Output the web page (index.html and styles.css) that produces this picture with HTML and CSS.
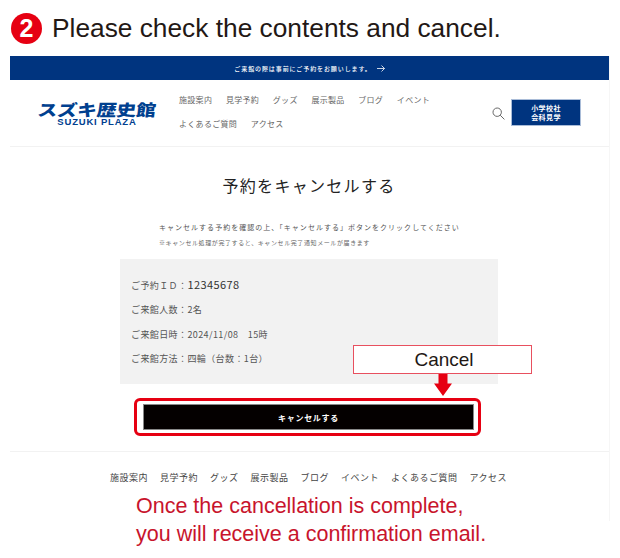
FILE: index.html
```html
<!DOCTYPE html>
<html lang="ja">
<head>
  <meta charset="UTF-8">
  <title>Please check the contents and cancel.</title>
  <meta name="viewport" content="width=device-width, initial-scale=1.0">
  <link rel="stylesheet" href="styles.css">
</head>
<body>
  <!-- STEP TITLE -->
  <div class="step">
    <div class="step-num">2</div>
    <h1 lang="en">Please check the contents and cancel.</h1>
  </div>

  <div class="page">
    <!-- NOTICE BAR -->
    <div class="notice">
      <span>ご来館の際は事前にご予約をお願いします。</span>
      <svg class="notice-arrow" width="8" height="7" viewBox="0 0 8 7" fill="none" stroke="#fff" stroke-width="0.8">
        <path d="M0 3.500H7.500M4.500 0.500L7.500 3.500L4.500 6.500"/>
      </svg>
    </div>

    <!-- HEADER -->
    <div class="header">
      <div class="logo">
        <div class="logo-jp">スズキ歴史館</div>
        <div class="logo-en" lang="en">SUZUKI PLAZA</div>
      </div>
      <div class="nav">
        <a>施設案内</a>
        <a>見学予約</a>
        <a>グッズ</a>
        <a>展示製品</a>
        <a>ブログ</a>
        <a>イベント</a>
        <a>よくあるご質問</a>
        <a>アクセス</a>
      </div>
      <svg class="search" width="13" height="13" viewBox="0 0 13 13" fill="none" stroke="#666" stroke-width="1">
        <circle cx="5.2" cy="5.2" r="4.2"/>
        <path d="M8.2 8.2L12.4 12.4"/>
      </svg>
      <div class="school-btn">小学校社<br>会科見学</div>
    </div>

    <!-- CONTENT -->
    <div class="content">
      <h2>予約をキャンセルする</h2>
      <p class="lead">キャンセルする予約を確認の上、「キャンセルする」ボタンをクリックしてください</p>
      <p class="small">※キャンセル処理が完了すると、キャンセル完了通知メールが届きます</p>

      <div class="detail">
        <div class="detail-row">ご予約ＩＤ：<span class="id">12345678</span></div>
        <div class="detail-row">ご来館人数：2名</div>
        <div class="detail-row">ご来館日時：2024/11/08　15時</div>
        <div class="detail-row">ご来館方法：四輪（台数：1台）</div>
      </div>

      <div class="cancel-area">
        <div class="callout" lang="en">Cancel</div>
        <svg class="callout-arrow" width="18" height="22" viewBox="0 0 18 22" fill="#e60012">
          <path d="M4.500 0H13.500V9.500H18L9 22L0 9.500H4.500Z"/>
        </svg>
        <div class="highlight">
          <button type="button">キャンセルする</button>
        </div>
      </div>
    </div>

    <!-- FOOTER -->
    <div class="footer-nav">
      <a>施設案内</a>
      <a>見学予約</a>
      <a>グッズ</a>
      <a>展示製品</a>
      <a>ブログ</a>
      <a>イベント</a>
      <a>よくあるご質問</a>
      <a>アクセス</a>
    </div>
  </div>

  <p class="complete" lang="en">Once the cancellation is complete,<br>you will receive a confirmation email.</p>
</body>
</html>
```

FILE: styles.css
```css
* {
  margin: 0;
  padding: 0;
  box-sizing: border-box;
}

body {
  font-family: "Noto Sans CJK JP", "Noto Sans", sans-serif;
  background: white;
  color: #333;
  width: 620px;
  height: 558px;
  overflow: hidden;
}

/* STEP TITLE */
.step {
  display: flex;
  align-items: center;
  gap: 10px;
  height: 55px;
  padding: 2px 0 0 11px;
}

.step-num {
  width: 31px;
  height: 31px;
  border-radius: 50%;
  background: #e60012;
  color: white;
  font-family: "Liberation Sans", sans-serif;
  font-size: 25px;
  font-weight: bold;
  line-height: 31px;
  text-align: center;
}

h1 {
  font-family: "Liberation Sans", sans-serif;
  font-size: 26.300px;
  font-weight: normal;
  color: #231815;
}

.page {
  width: 600px;
  margin-left: 10px;
  height: 465px;
  border-right: 1px solid #f6f6f6;
}

/* NOTICE BAR */
.notice {
  height: 24px;
  margin-top: 1px;
  background: #00347f;
  color: white;
  font-size: 6px;
  font-weight: 500;
  letter-spacing: 0.9px;
  display: flex;
  align-items: center;
  justify-content: center;
  gap: 5px;
}

/* HEADER */
.header {
  height: 67px;
  border-bottom: 1px solid #f2f2f2;
  display: flex;
  align-items: flex-start;
  position: relative;
}

.logo {
  margin: 21px 0 0 28px;
  width: 118px;
  color: #00408f;
  text-align: center;
}

.logo-jp {
  font-size: 16px;
  font-weight: 900;
  line-height: 16px;
  white-space: nowrap;
  text-align: left;
  transform: scaleX(1.23) skewX(-6deg);
  transform-origin: left center;
}

.logo-en {
  font-family: "Liberation Sans", sans-serif;
  font-size: 9.500px;
  font-weight: bold;
  line-height: 9px;
  letter-spacing: 0.8px;
  white-space: nowrap;
}

.nav {
  margin: 11px 0 0 23px;
  width: 270px;
  display: flex;
  flex-wrap: wrap;
  column-gap: 13.700px;
  row-gap: 6px;
  font-size: 8px;
  line-height: 18px;
  letter-spacing: 0.3px;
  color: #666;
}

.search {
  margin: 27px 0 0 43px;
}

.school-btn {
  margin: 19px 0 0 6px;
  width: 70px;
  height: 27px;
  background: #00347f;
  color: white;
  font-size: 7px;
  font-weight: bold;
  line-height: 9px;
  letter-spacing: 0.4px;
  text-align: center;
  padding-top: 3.500px;
  border: 1px solid #a9bcd8;
}

/* CONTENT */
.content {
  height: 305px;
  border-bottom: 1px solid #f2f2f2;
  padding: 27px 0 0 110px;
}

h2 {
  width: 378px;
  font-size: 16px;
  font-weight: normal;
  line-height: 22px;
  letter-spacing: 1.300px;
  text-align: center;
  color: #222;
}

.lead {
  margin: 25px 0 0 39px;
  font-size: 7px;
  line-height: 12px;
  letter-spacing: 1.020px;
  color: #555;
  white-space: nowrap;
}

.small {
  margin: 5px 0 0 39px;
  font-size: 6px;
  line-height: 10px;
  letter-spacing: 0.600px;
  color: #666;
  white-space: nowrap;
}

.detail {
  margin-top: 11px;
  width: 378px;
  height: 125px;
  background: #f2f2f2;
  padding: 18px 11px 0;
  display: flex;
  flex-direction: column;
  gap: 10.400px;
}

.detail-row {
  font-size: 9px;
  line-height: 14px;
  letter-spacing: 0.4px;
  color: #555;
}

.id {
  font-size: 11px;
  color: #333;
}

.cancel-area {
  position: relative;
  margin: 14px 0 0 14px;
  width: 347px;
}

.callout {
  position: absolute;
  left: 219px;
  top: -53px;
  width: 179px;
  height: 29px;
  padding-left: 3px;
  background: white;
  border: 1px solid #e8505f;
  color: #231815;
  font-family: "Liberation Sans", sans-serif;
  font-size: 19px;
  line-height: 27px;
  text-align: center;
}

.callout-arrow {
  position: absolute;
  left: 300px;
  top: -24px;
}

.highlight {
  width: 347px;
  height: 38px;
  border: 3px solid #e60012;
  border-radius: 6px;
  padding: 3px 4px 3px 6px;
}

button {
  display: block;
  width: 100%;
  height: 26px;
  background: #040000;
  color: white;
  border: 1px solid #888;
  font-family: inherit;
  font-size: 8px;
  font-weight: bold;
  letter-spacing: 0.7px;
}

/* FOOTER */
.footer-nav {
  display: flex;
  justify-content: center;
  gap: 12px;
  padding: 17px 2px 0 0;
  font-size: 9px;
  line-height: 18px;
  letter-spacing: 0.5px;
  color: #444;
}

.complete {
  margin: -29px 0 0 136px;
  font-family: "Liberation Sans", sans-serif;
  font-size: 21.500px;
  line-height: 28px;
  color: #c8142c;
  position: relative;
}
```
